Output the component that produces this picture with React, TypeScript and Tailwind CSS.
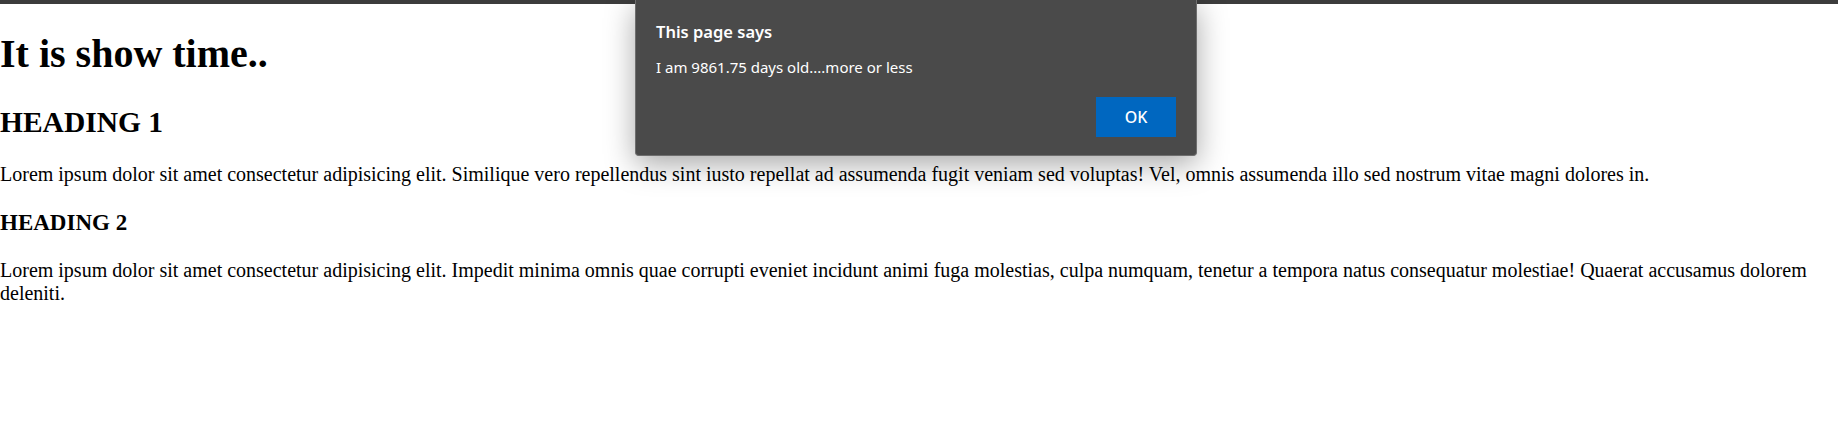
import React from "react";

export default function App() {
  return (
    <div className="relative w-[1838px] h-[440px] bg-white overflow-hidden">
      <div className="h-[4px] bg-[#3c3c3c]" />
      <div className="text-black [font-family:'Liberation_Serif','Times_New_Roman',serif]">
        <h1 className="text-[40px] font-bold leading-[46px] mt-[27px] mb-[28px]">It is show time..</h1>
        <h2 className="text-[29.5px] font-bold leading-[34.5px] mb-[23px]">HEADING 1</h2>
        <p className="text-[20px] leading-[23px] mb-[23.4px]">
          Lorem ipsum dolor sit amet consectetur adipisicing elit. Similique vero repellendus sint iusto repellat ad assumenda fugit veniam sed voluptas! Vel, omnis assumenda illo sed nostrum vitae magni dolores in.
        </p>
        <h3 className="text-[23px] font-bold leading-[27px] mb-[23.4px]">HEADING 2</h3>
        <p className="text-[20px] leading-[23px]">
          Lorem ipsum dolor sit amet consectetur adipisicing elit. Impedit minima omnis quae corrupti eveniet incidunt animi fuga molestias, culpa numquam, tenetur a tempora natus consequatur molestiae! Quaerat accusamus dolorem deleniti.
        </p>
      </div>

      <div className="absolute left-[635px] top-0 w-[562px] h-[156px] bg-[#4a4a4a] rounded-b-[4px] border border-t-0 border-[#6e6e6e] shadow-[0_8px_30px_rgba(0,0,0,0.35)] flex flex-col px-[20px] [font-family:'Noto_Sans','Open_Sans',sans-serif] text-white">
        <div className="mt-[21px] text-[16.5px] font-semibold leading-[22px]">This page says</div>
        <div className="mt-[14px] text-[15px] leading-[20px]">I am 9861.75 days old....more or less</div>
        <div className="mt-auto mb-[18px] flex justify-end">
          <button className="w-[80px] h-[40px] bg-[#0067c0] text-white text-[16px] font-medium">OK</button>
        </div>
      </div>
    </div>
  );
}
